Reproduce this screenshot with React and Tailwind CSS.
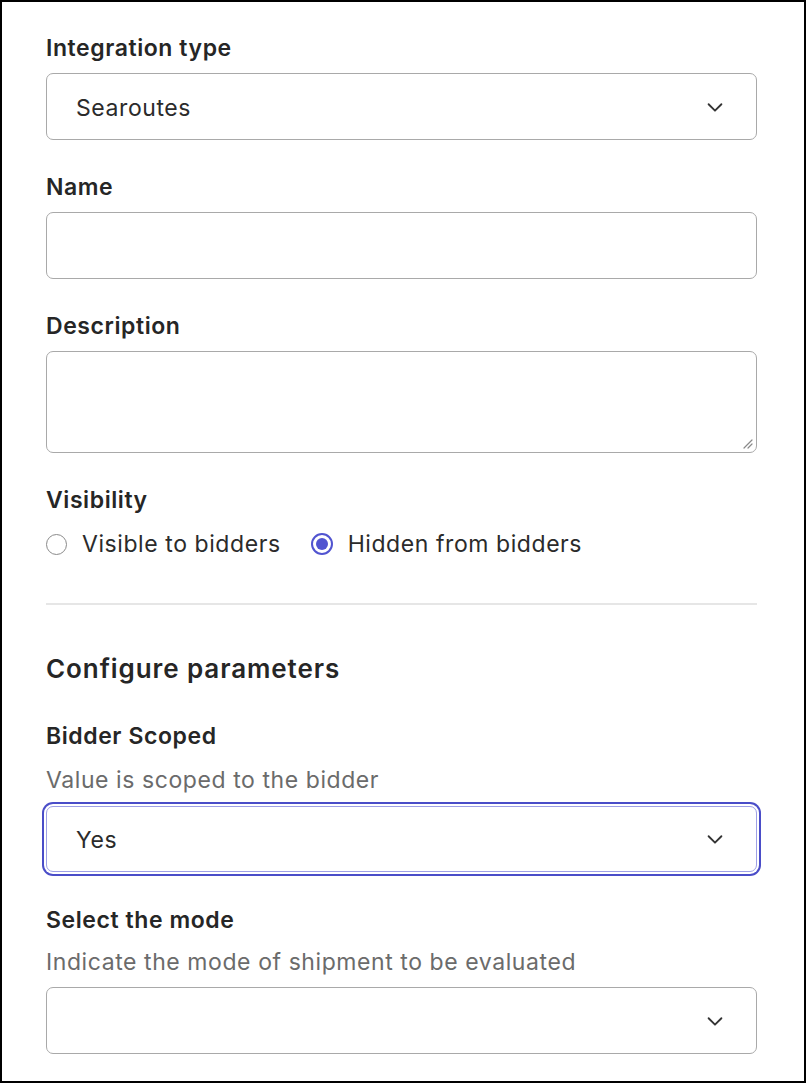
import React from 'react';

const font = { fontFamily: 'Inter, "Noto Sans", sans-serif' };

function Chevron() {
  return (
    <svg width="22" height="22" viewBox="0 0 24 24" fill="none" stroke="#333" strokeWidth="2" strokeLinecap="round" strokeLinejoin="round">
      <path d="M5 9l7 7 7-7" />
    </svg>
  );
}

function Label({ children, className = '' }) {
  return <div className={`text-[23px] leading-[28px] tracking-[0.025em] font-semibold text-[#262626] ${className}`}>{children}</div>;
}

function Helper({ children, className = '' }) {
  return <div className={`text-[23px] leading-[28px] tracking-[0.025em] text-[#6b6b6b] ${className}`}>{children}</div>;
}

function SelectBox({ value, focused, className = '' }) {
  return (
    <div
      className={`flex items-center justify-between rounded-[7px] bg-white pl-[29px] pr-[30px] ${
        focused
          ? 'border border-[#9ea0e6] ring-2 ring-[#4a4dc8] ring-offset-2 ring-offset-white h-[66px]'
          : 'border-[1.5px] border-[#a9a9a9] h-[67px]'
      } ${className}`}
    >
      <span className="text-[23px] leading-[28px] tracking-[0.025em] text-[#2b2b2b] pt-[2px]">{value}</span>
      <Chevron />
    </div>
  );
}

function Radio({ checked, label }) {
  return (
    <label className="flex items-center gap-[15px]">
      {checked ? (
        <span className="w-[22px] h-[22px] rounded-full border-2 border-[#5154d0] flex items-center justify-center">
          <span className="w-[12px] h-[12px] rounded-full bg-[#5154d0]" />
        </span>
      ) : (
        <span className="w-[21px] h-[21px] rounded-full border-[1.5px] border-[#8a8a8a]" />
      )}
      <span className="text-[23px] leading-[28px] tracking-[0.025em] text-[#2b2b2b]">{label}</span>
    </label>
  );
}

export default function App() {
  return (
    <div className="w-[806px] h-[1083px] border-2 border-black bg-white overflow-hidden" style={font}>
      <div className="pl-[44px] pr-[47px] pt-[32px]">
        <Label>Integration type</Label>
        <SelectBox value="Searoutes" className="mt-[11px]" />

        <Label className="mt-[33px]">Name</Label>
        <div className="mt-[11px] h-[67px] rounded-[7px] border-[1.5px] border-[#a9a9a9]" />

        <Label className="mt-[33px]">Description</Label>
        <div className="mt-[11px] h-[102px] rounded-[7px] border-[1.5px] border-[#a9a9a9] relative">
          <svg className="absolute right-[2px] bottom-[2px]" width="12" height="12" viewBox="0 0 12 12" stroke="#8a8a8a" strokeWidth="1.2" strokeLinecap="round">
            <path d="M2 10L10 2M6 10L10 6" />
          </svg>
        </div>

        <Label className="mt-[33px]">Visibility</Label>
        <div className="mt-[16px] flex items-center gap-[30px]">
          <Radio label="Visible to bidders" />
          <Radio checked label="Hidden from bidders" />
        </div>

        <div className="mt-[45px] h-[2px] bg-[#e6e6e6]" />

        <div className="mt-[48px] text-[26px] leading-[32px] tracking-[0.035em] font-semibold text-[#262626]">Configure parameters</div>

        <Label className="mt-[37px]">Bidder Scoped</Label>
        <Helper className="mt-[16px]">Value is scoped to the bidder</Helper>
        <SelectBox value="Yes" focused className="mt-[12px]" />

        <Label className="mt-[34px]">Select the mode</Label>
        <Helper className="mt-[14px]">Indicate the mode of shipment to be evaluated</Helper>
        <SelectBox value="" className="mt-[11px]" />
      </div>
    </div>
  );
}
